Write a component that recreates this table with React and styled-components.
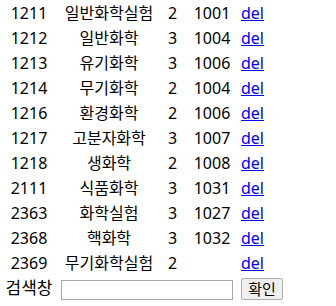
import React from "react";
import styled, { createGlobalStyle } from "styled-components";

const GlobalStyle = createGlobalStyle`
  body {
    margin: 0;
    background: #fff;
    color: #000;
    font-family: "Noto Sans", "Noto Sans CJK KR", sans-serif;
    font-size: 16px;
  }
`;

const subjects = [
  { code: "1211", name: "일반화학실험", credit: 2, prof: "1001" },
  { code: "1212", name: "일반화학", credit: 3, prof: "1004" },
  { code: "1213", name: "유기화학", credit: 3, prof: "1006" },
  { code: "1214", name: "무기화학", credit: 2, prof: "1004" },
  { code: "1216", name: "환경화학", credit: 2, prof: "1006" },
  { code: "1217", name: "고분자화학", credit: 3, prof: "1007" },
  { code: "1218", name: "생화학", credit: 2, prof: "1008" },
  { code: "2111", name: "식품화학", credit: 3, prof: "1031" },
  { code: "2363", name: "화학실험", credit: 3, prof: "1027" },
  { code: "2368", name: "핵화학", credit: 3, prof: "1032" },
  { code: "2369", name: "무기화학실험", credit: 2, prof: "" },
];

const App = () => {
  return (
    <>
      <GlobalStyle />
      <Table>
        <colgroup>
          <col style={{ width: 58 }} />
          <col style={{ width: 102 }} />
          <col style={{ width: 25 }} />
          <col style={{ width: 54 }} />
          <col style={{ width: 60 }} />
        </colgroup>
        <tbody>
          {subjects.map((s) => (
            <Row key={s.code}>
              <Cell>{s.code}</Cell>
              <Cell>{s.name}</Cell>
              <Cell>{s.credit}</Cell>
              <Cell>{s.prof}</Cell>
              <Cell $align="left">
                <DelLink href="#">del</DelLink>
              </Cell>
            </Row>
          ))}
          <Row>
            <Cell>
              <Label>검색창</Label>
            </Cell>
            <Cell colSpan={3} $align="left">
              <SearchInput type="text" />
            </Cell>
            <Cell $align="left">
              <Button>확인</Button>
            </Cell>
          </Row>
        </tbody>
      </Table>
    </>
  );
};

const Table = styled.table`
  border-collapse: collapse;
  table-layout: fixed;
  width: 299px;
`;

const Row = styled.tr`
  height: 25px;
`;

const Cell = styled.td`
  padding: 0;
  line-height: 20px;
  vertical-align: middle;
  white-space: nowrap;
  text-align: ${(p) => p.$align || "center"};
  padding-left: ${(p) => (p.$align === "left" ? "2px" : "0")};
`;

const Label = styled.span`
  font-size: 17px;
`;

const DelLink = styled.a`
  color: #0000ee;
  text-decoration: underline;
`;

const SearchInput = styled.input`
  box-sizing: border-box;
  display: block;
  width: 172px;
  height: 20px;
  margin: 5px 0 0 1px;
  padding: 1px 2px;
  border: 1px solid #a9a9a9;
  background: #fff;
  font-size: 13px;
`;

const Button = styled.button`
  box-sizing: border-box;
  display: block;
  width: 42px;
  height: 22px;
  margin: 2px 0 0 0;
  padding: 0;
  border: 1px solid #adadad;
  border-radius: 2px;
  background: #f0f0f0;
  color: #000;
  font-family: "Noto Sans CJK KR", sans-serif;
  font-size: 15px;
  line-height: 20px;
`;

export default App;
